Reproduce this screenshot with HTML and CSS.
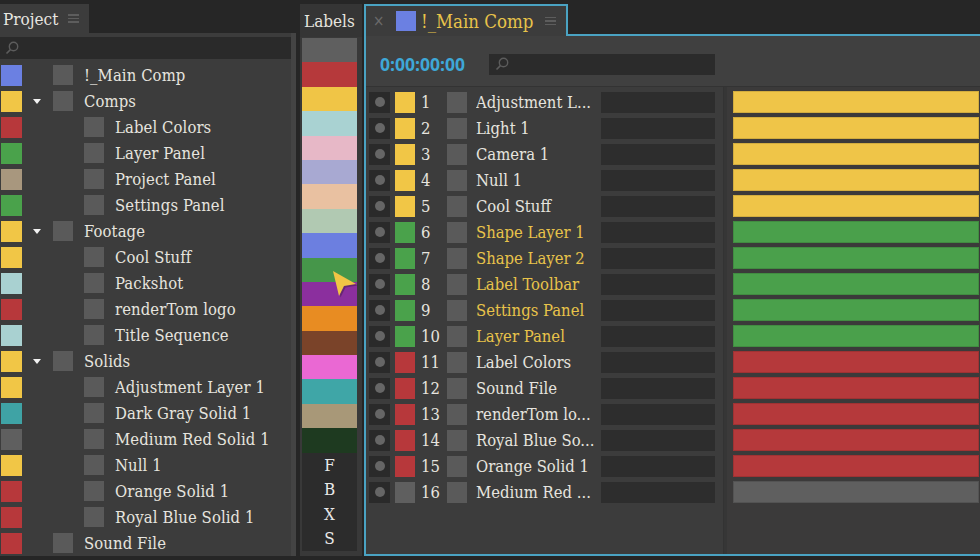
FILE: index.html
```html
<!DOCTYPE html>
<html>
<head>
<meta charset="utf-8">
<link rel="stylesheet" href="styles.css">
</head>
<body>
<div class="app">
  <section class="project">
    <div class="tabbar">
      <div class="tab">Project <span class="menu"><i></i><i></i><i></i></span></div>
    </div>
    <div class="pbody">
      <div class="search">
        <svg class="mag" width="14" height="14" viewBox="0 0 14 14"><circle cx="8.5" cy="5.5" r="4.2" fill="none" stroke="#5c5c5c" stroke-width="1.4"/><line x1="5.4" y1="8.6" x2="1.5" y2="12.5" stroke="#5c5c5c" stroke-width="1.6"/></svg>
      </div>
      <ul class="tree">
        <li class="row"><span class="sw c-blue"></span><span class="tw"></span><span class="ico"></span><span class="nm">!_Main Comp</span></li>
        <li class="row"><span class="sw c-yellow"></span><span class="tw open"></span><span class="ico"></span><span class="nm">Comps</span></li>
        <li class="row"><span class="sw c-red"></span><span class="tw"></span><span class="ind"></span><span class="ico"></span><span class="nm">Label Colors</span></li>
        <li class="row"><span class="sw c-green"></span><span class="tw"></span><span class="ind"></span><span class="ico"></span><span class="nm">Layer Panel</span></li>
        <li class="row"><span class="sw c-tan"></span><span class="tw"></span><span class="ind"></span><span class="ico"></span><span class="nm">Project Panel</span></li>
        <li class="row"><span class="sw c-green"></span><span class="tw"></span><span class="ind"></span><span class="ico"></span><span class="nm">Settings Panel</span></li>
        <li class="row"><span class="sw c-yellow"></span><span class="tw open"></span><span class="ico"></span><span class="nm">Footage</span></li>
        <li class="row"><span class="sw c-yellow"></span><span class="tw"></span><span class="ind"></span><span class="ico"></span><span class="nm">Cool Stuff</span></li>
        <li class="row"><span class="sw c-aqua"></span><span class="tw"></span><span class="ind"></span><span class="ico"></span><span class="nm">Packshot</span></li>
        <li class="row"><span class="sw c-red"></span><span class="tw"></span><span class="ind"></span><span class="ico"></span><span class="nm">renderTom logo</span></li>
        <li class="row"><span class="sw c-aqua"></span><span class="tw"></span><span class="ind"></span><span class="ico"></span><span class="nm">Title Sequence</span></li>
        <li class="row"><span class="sw c-yellow"></span><span class="tw open"></span><span class="ico"></span><span class="nm">Solids</span></li>
        <li class="row"><span class="sw c-yellow"></span><span class="tw"></span><span class="ind"></span><span class="ico"></span><span class="nm">Adjustment Layer 1</span></li>
        <li class="row"><span class="sw c-teal"></span><span class="tw"></span><span class="ind"></span><span class="ico"></span><span class="nm">Dark Gray Solid 1</span></li>
        <li class="row"><span class="sw c-gray"></span><span class="tw"></span><span class="ind"></span><span class="ico"></span><span class="nm">Medium Red Solid 1</span></li>
        <li class="row"><span class="sw c-yellow"></span><span class="tw"></span><span class="ind"></span><span class="ico"></span><span class="nm">Null 1</span></li>
        <li class="row"><span class="sw c-red"></span><span class="tw"></span><span class="ind"></span><span class="ico"></span><span class="nm">Orange Solid 1</span></li>
        <li class="row"><span class="sw c-red"></span><span class="tw"></span><span class="ind"></span><span class="ico"></span><span class="nm">Royal Blue Solid 1</span></li>
        <li class="row"><span class="sw c-red"></span><span class="tw"></span><span class="ico"></span><span class="nm">Sound File</span></li>
      </ul>
    </div>
  </section>

  <section class="labels">
    <div class="ltab">Labels</div>
    <div class="lbody">
      <ul class="palette">
        <li class="l-gray"></li><li class="l-red"></li><li class="l-yellow"></li><li class="l-aqua"></li>
        <li class="l-pink"></li><li class="l-lav"></li><li class="l-peach"></li><li class="l-sea"></li>
        <li class="l-blue"></li><li class="l-green"></li><li class="l-purple"></li><li class="l-orange"></li>
        <li class="l-brown"></li><li class="l-fuchsia"></li><li class="l-cyan"></li><li class="l-sand"></li>
        <li class="l-dkgreen"></li>
      </ul>
      <ul class="keys">
        <li>F</li><li>B</li><li>X</li><li>S</li>
      </ul>
    </div>
  </section>

  <section class="comp">
    <div class="chead">
      <div class="ctab">
        <span class="close">×</span>
        <span class="csw"></span>
        <span class="ctitle">!_Main Comp</span>
        <span class="menu"><i></i><i></i><i></i></span>
      </div>
      <div class="cfill"></div>
    </div>
    <div class="cbody">
      <div class="ctools">
        <span class="tc">0:00:00:00</span>
        <div class="csearch">
          <svg class="mag" width="14" height="14" viewBox="0 0 14 14"><circle cx="8.5" cy="5.5" r="4.2" fill="none" stroke="#5c5c5c" stroke-width="1.4"/><line x1="5.4" y1="8.6" x2="1.5" y2="12.5" stroke="#5c5c5c" stroke-width="1.6"/></svg>
        </div>
      </div>
      <div class="grid">
        <div class="layers">
          <div class="lr"><span class="eye"><i></i></span><span class="lsw c-yellow"></span><span class="num">1</span><span class="lico"></span><span class="lnm">Adjustment L...</span><span class="box"></span></div>
          <div class="lr"><span class="eye"><i></i></span><span class="lsw c-yellow"></span><span class="num">2</span><span class="lico"></span><span class="lnm">Light 1</span><span class="box"></span></div>
          <div class="lr"><span class="eye"><i></i></span><span class="lsw c-yellow"></span><span class="num">3</span><span class="lico"></span><span class="lnm">Camera 1</span><span class="box"></span></div>
          <div class="lr"><span class="eye"><i></i></span><span class="lsw c-yellow"></span><span class="num">4</span><span class="lico"></span><span class="lnm">Null 1</span><span class="box"></span></div>
          <div class="lr"><span class="eye"><i></i></span><span class="lsw c-yellow"></span><span class="num">5</span><span class="lico"></span><span class="lnm">Cool Stuff</span><span class="box"></span></div>
          <div class="lr sel"><span class="eye"><i></i></span><span class="lsw c-green"></span><span class="num">6</span><span class="lico"></span><span class="lnm">Shape Layer 1</span><span class="box"></span></div>
          <div class="lr sel"><span class="eye"><i></i></span><span class="lsw c-green"></span><span class="num">7</span><span class="lico"></span><span class="lnm">Shape Layer 2</span><span class="box"></span></div>
          <div class="lr sel"><span class="eye"><i></i></span><span class="lsw c-green"></span><span class="num">8</span><span class="lico"></span><span class="lnm">Label Toolbar</span><span class="box"></span></div>
          <div class="lr sel"><span class="eye"><i></i></span><span class="lsw c-green"></span><span class="num">9</span><span class="lico"></span><span class="lnm">Settings Panel</span><span class="box"></span></div>
          <div class="lr sel"><span class="eye"><i></i></span><span class="lsw c-green"></span><span class="num">10</span><span class="lico"></span><span class="lnm">Layer Panel</span><span class="box"></span></div>
          <div class="lr"><span class="eye"><i></i></span><span class="lsw c-red"></span><span class="num">11</span><span class="lico"></span><span class="lnm">Label Colors</span><span class="box"></span></div>
          <div class="lr"><span class="eye"><i></i></span><span class="lsw c-red"></span><span class="num">12</span><span class="lico"></span><span class="lnm">Sound File</span><span class="box"></span></div>
          <div class="lr"><span class="eye"><i></i></span><span class="lsw c-red"></span><span class="num">13</span><span class="lico"></span><span class="lnm">renderTom lo...</span><span class="box"></span></div>
          <div class="lr"><span class="eye"><i></i></span><span class="lsw c-red"></span><span class="num">14</span><span class="lico"></span><span class="lnm">Royal Blue So...</span><span class="box"></span></div>
          <div class="lr"><span class="eye"><i></i></span><span class="lsw c-red"></span><span class="num">15</span><span class="lico"></span><span class="lnm">Orange Solid 1</span><span class="box"></span></div>
          <div class="lr"><span class="eye"><i></i></span><span class="lsw c-gray"></span><span class="num">16</span><span class="lico"></span><span class="lnm">Medium Red ...</span><span class="box"></span></div>
        </div>
        <div class="divider"></div>
        <div class="timeline">
          <div class="bar b-yellow"></div><div class="bar b-yellow"></div><div class="bar b-yellow"></div><div class="bar b-yellow"></div><div class="bar b-yellow"></div>
          <div class="bar b-green"></div><div class="bar b-green"></div><div class="bar b-green"></div><div class="bar b-green"></div><div class="bar b-green"></div>
          <div class="bar b-red"></div><div class="bar b-red"></div><div class="bar b-red"></div><div class="bar b-red"></div><div class="bar b-red"></div>
          <div class="bar b-gray"></div>
        </div>
      </div>
    </div>
  </section>

  <svg class="cursor" width="30" height="32" viewBox="0 0 30 32">
    <polygon points="4,4 27,17 15,19 10,29" fill="#3a1f40" opacity="0.45" transform="translate(1.5,1.5)"/>
    <polygon points="4,4 27,17 15,19 10,29" fill="#f1c445"/>
  </svg>
</div>
</body>
</html>
```

FILE: styles.css
```css
* { box-sizing: border-box; margin: 0; padding: 0; }
html, body { width: 980px; height: 560px; overflow: hidden; background: #262626; }
body {
  font-family: "DejaVu Serif Condensed", "DejaVu Serif", serif;
  font-stretch: condensed;
  font-size: 16px;
  color: #e6e4df;
}
ul { list-style: none; }

.app { position: relative; display: flex; padding-top: 4px; height: 560px; width: 980px; overflow: hidden; }

/* colours */
.c-blue { background: #6b80e2; }
.c-yellow { background: #f1c646; }
.c-red { background: #b7383b; }
.c-green { background: #4aa24b; }
.c-tan { background: #a8977e; }
.c-aqua { background: #a9d1d1; }
.c-teal { background: #3fa3a5; }
.c-gray { background: #5f5f5f; }

.menu { display: inline-flex; flex-direction: column; gap: 2px; width: 11px; margin-left: 10px; }
.menu i { display: block; height: 1.5px; background: #5d5d5d; }

/* project */
.project { width: 296px; flex: none; display: flex; flex-direction: column; height: 552px; }
.tabbar { height: 31px; display: flex; }
.tab {
  width: 89px; background: #3c3c3c; padding-left: 3px;
  display: flex; align-items: center; font-size: 17px; color: #e8e6e1;
}
.pbody {
  flex: 1; background: #3c3c3c; padding: 4px 0 0 0;
  border-right: 5px solid #444;
}
.search { height: 22px; background: #2a2a2a; display: flex; align-items: center; padding-left: 5px; margin-bottom: 3px; }
.tree .row { height: 26px; display: flex; align-items: center; padding-left: 1px; white-space: nowrap; }
.sw { width: 21px; height: 21px; flex: none; }
.tw { width: 31px; flex: none; position: relative; height: 21px; }
.tw.open::after {
  content: ""; position: absolute; left: 11px; top: 8px;
  border-left: 4.5px solid transparent; border-right: 4.5px solid transparent;
  border-top: 5px solid #f2f2f2;
}
.ind { width: 31px; flex: none; }
.ico { width: 20px; height: 20px; background: #5a5a5a; flex: none; margin-right: 11px; }
.nm { font-size: 16.5px; letter-spacing: 0.1px; }

/* labels */
.labels { width: 62px; flex: none; margin-left: 4px; display: flex; flex-direction: column; height: 552px; }
.ltab { height: 33px; background: #353535; padding-left: 4px; font-size: 17px; display: flex; align-items: center; }
.lbody { flex: 1; background: #393939; padding: 1px 5px 0 2px; }
.palette li { height: 24.4px; }
.l-gray { background: #5f5f5f; }
.l-red { background: #b6393b; }
.l-yellow { background: #f0c546; }
.l-aqua { background: #a9d2d2; }
.l-pink { background: #e7b8c7; }
.l-lav { background: #a8a9d2; }
.l-peach { background: #e9c1a1; }
.l-sea { background: #b1c9b2; }
.l-blue { background: #6c7fe0; }
.l-green { background: #46964a; }
.l-purple { background: #8b2f9e; }
.l-orange { background: #e88c22; }
.l-brown { background: #7a4329; }
.l-fuchsia { background: #ea68d3; }
.l-cyan { background: #3fa6a7; }
.l-sand { background: #a89878; }
.l-dkgreen { background: #1e3a20; }
.keys { background: #2c2c2c; padding-top: 0; }
.keys li { height: 24.5px; text-align: center; line-height: 24.5px; font-size: 17px; color: #e8e8e8; }

/* comp */
.comp { margin-left: 2px; width: 640px; flex: none; display: flex; flex-direction: column; height: 552px; }
.chead { height: 32px; display: flex; }
.ctab {
  width: 204px; border: 2px solid #4aa3c3; border-bottom: none; background: #3c3c3c;
  display: flex; align-items: center; padding-left: 7px;
}
.close { color: #6a6a6a; font-family: "DejaVu Sans", sans-serif; font-size: 15px; width: 23px; }
.csw { width: 20px; height: 20px; background: #6b80e2; flex: none; margin-right: 5px; }
.ctitle { color: #e8c34a; font-size: 18.5px; }
.ctab .menu { margin-left: 12px; }
.cfill { flex: 1; border-bottom: 2px solid #4aa3c3; }
.cbody { flex: 1; background: #3d3d3d; border: 2px solid #4aa3c3; border-top: none; display: flex; flex-direction: column; }
.ctools { height: 51px; flex: none; display: flex; align-items: center; padding: 6px 0 0 14px; border-bottom: 1px solid #333; background: #404040; }
.tc { font-family: "Open Sans", Roboto, sans-serif; font-stretch: normal; font-weight: 700; font-size: 17.5px; color: #3ea7d8; width: 109px; }
.csearch { width: 226px; height: 21px; background: #2b2b2b; display: flex; align-items: center; padding-left: 6px; }
.grid { flex: 1; display: flex; }
.layers { width: 357px; flex: none; padding-top: 2px; background: #3c3c3c; }
.lr { height: 26px; display: flex; align-items: center; padding-left: 3px; white-space: nowrap; }
.eye { width: 21px; height: 21px; background: #2a2a2a; display: flex; align-items: center; justify-content: center; flex: none; margin-right: 5px; }
.eye i { width: 10px; height: 10px; border-radius: 50%; background: #666; }
.lsw { width: 20px; height: 21px; flex: none; }
.num { width: 32px; padding-left: 6px; font-size: 16.5px; flex: none; }
.lico { width: 20px; height: 21px; background: #5a5a5a; flex: none; margin-right: 9px; }
.lnm { width: 125px; overflow: hidden; font-size: 16.5px; flex: none; }
.sel .lnm { color: #e8c34a; }
.box { width: 114px; height: 21px; background: #2d2d2d; flex: none; }
.divider { width: 4px; flex: none; background: #363636; border-left: 1px solid #333; }
.timeline { flex: 1; padding: 4px 0 0 6px; background: #3b3a3a; display: flex; flex-direction: column; gap: 4px; }
.bar { height: 22px; width: 246px; flex: none; border: 1px solid rgba(0,0,0,0.12); }
.b-yellow { background: #efc548; }
.b-green { background: #4aa04b; }
.b-red { background: #b5393b; }
.b-gray { background: #5f5f5f; }

.cursor { position: absolute; left: 329px; top: 267px; }
```
